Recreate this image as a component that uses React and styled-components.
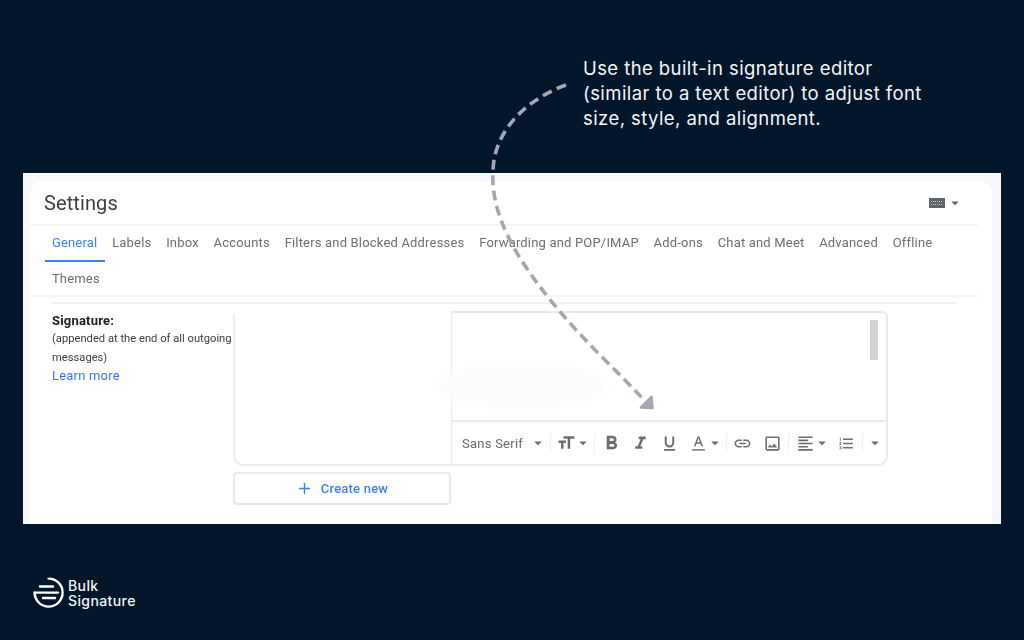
import React from 'react';
import styled, { createGlobalStyle } from 'styled-components';
import {
  MdArrowDropDown,
  MdFormatAlignLeft,
  MdFormatBold,
  MdFormatItalic,
  MdFormatListNumbered,
  MdFormatSize,
  MdFormatUnderlined,
  MdLink,
  MdOutlineImage,
} from 'react-icons/md';
import { LuPlus } from 'react-icons/lu';

const tabs = [
  'General',
  'Labels',
  'Inbox',
  'Accounts',
  'Filters and Blocked Addresses',
  'Forwarding and POP/IMAP',
  'Add-ons',
  'Chat and Meet',
  'Advanced',
  'Offline',
  'Themes',
];

export default function App() {
  return (
    <Page>
      <GlobalStyle />
      <Caption>
        Use the built-in signature editor
        <br />
        (similar to a text editor) to adjust font
        <br />
        size, style, and alignment.
      </Caption>

      <Shot>
        <Panel>
          <Header>
            <Title>Settings</Title>
            <KeyboardPick>
              <svg width="16" height="10" viewBox="0 0 16 10">
                <rect width="16" height="10" fill="#626568" />
                <path d="M2 3.5H14M2 6.5H14" stroke="#c4c6c8" strokeWidth="1" strokeDasharray="1 1" />
              </svg>
              <MdArrowDropDown size={18} />
            </KeyboardPick>
          </Header>

          <Tabs>
            {tabs.map((tab) => (
              <Tab key={tab} $active={tab === 'General'}>{tab}</Tab>
            ))}
          </Tabs>

          <Content>
            <Labels>
              <Strong>Signature:</Strong>
              <Note>
                (appended at the end of all outgoing
                <br />
                messages)
              </Note>
              <Learn>Learn more</Learn>
            </Labels>

            <SignatureColumn>
              <SignatureBox>
                <ListPane />
                <Editor>
                  <EditorBody>
                    <Smudge />
                    <Scrollbar />
                  </EditorBody>
                  <Toolbar>
                    <FontName>Sans Serif</FontName>
                    <Slot $w={22}><MdArrowDropDown size={18} /></Slot>
                    <Separator />
                    <Slot $w={28}><MdFormatSize size={20} /></Slot>
                    <Slot $w={6}><MdArrowDropDown size={18} /></Slot>
                    <Separator $left={8} />
                    <Slot $w={30}><MdFormatBold size={23} /></Slot>
                    <Slot $w={29}><MdFormatItalic size={21} /></Slot>
                    <Slot $w={28}><MdFormatUnderlined size={19} /></Slot>
                    <Slot $w={30}>
                      <svg width="17" height="17" viewBox="0 0 24 24" fill="currentColor">
                        <path d="M5.49 16h2.42l1.27-3.58h5.65L16.09 16h2.42L13.25 2h-2.5L5.49 16zm4.42-5.61 2.03-5.79h.12l2.03 5.79H9.91z" />
                        <rect x="3" y="20" width="18" height="2" />
                      </svg>
                    </Slot>
                    <Slot $w={4}><MdArrowDropDown size={18} /></Slot>
                    <Separator $left={8.5} />
                    <Slot $w={29}><MdLink size={19} /></Slot>
                    <Slot $w={31}><MdOutlineImage size={19} /></Slot>
                    <Separator $left={0} />
                    <Slot $w={31}><MdFormatAlignLeft size={19} /></Slot>
                    <Slot $w={3}><MdArrowDropDown size={18} /></Slot>
                    <Slot $w={30} $left={7.5}><MdFormatListNumbered size={17} /></Slot>
                    <Separator $left={0.5} />
                    <Slot $w={23}><MdArrowDropDown size={18} /></Slot>
                  </Toolbar>
                </Editor>
              </SignatureBox>
              <CreateButton>
                <LuPlus size={17} />
                Create new
              </CreateButton>
            </SignatureColumn>
          </Content>
        </Panel>
      </Shot>

      <Brand>
        <svg width="32" height="32" viewBox="0 0 32 32" fill="none" stroke="#fff" strokeWidth="2.4" strokeLinecap="round">
          <path d="M15.6 1.6A14 14 0 1 1 1.6 15.6" />
          <path d="M7 9.5H20" />
          <path d="M1.6 15.6H25" />
          <path d="M10 21H22" />
        </svg>
        <BrandName>Bulk<br />Signature</BrandName>
      </Brand>

      {/* dashed arrow lying over the screenshot */}
      <ArrowLayer viewBox="0 0 1024 640">
        <path
          d="M566 85C530 98 500 125 494 160C489 195 500 225 520 258C540 290 570 325 603 358C620 375 632 387 644 400"
          fill="none"
          stroke="#a3a7b1"
          strokeWidth="3.6"
          strokeDasharray="10 5.5"
        />
        <path d="M651.5 397L652.5 408L641 407.5Z" fill="#a3a7b1" stroke="#a3a7b1" strokeWidth="2.6" strokeLinejoin="round" />
      </ArrowLayer>
    </Page>
  );
}

const GlobalStyle = createGlobalStyle`
  html, body {
    margin: 0;
    padding: 0;
    background: #01162b;
  }
`;

const Page = styled.div`
  position: relative;
  width: 1024px;
  height: 640px;
  overflow: hidden;
  background: #01162b;
  font-family: Roboto, "Liberation Sans", sans-serif;
`;

const Caption = styled.div`
  box-sizing: border-box;
  height: 173px;
  padding: 56px 0 0 583px;
  color: #f4f6f8;
  font-family: Inter, "Open Sans", sans-serif;
  font-size: 18.5px;
  line-height: 25px;
  letter-spacing: 0.42px;
`;

const Shot = styled.div`
  box-sizing: border-box;
  width: 978px;
  height: 351px;
  margin-left: 23px;
  padding: 8px 9px 0 7px;
  background: #f6f8fc;
`;

const Panel = styled.div`
  height: 100%;
  background: #fff;
  border-radius: 14px 14px 0 0;
  filter: blur(0.35px);
`;

const Header = styled.div`
  display: flex;
  align-items: center;
  justify-content: space-between;
  box-sizing: border-box;
  height: 45px;
  margin-right: 14px;
  padding: 0 14px;
  border-bottom: 2px solid #f3f4f6;
`;

const Title = styled.div`
  color: #3c4043;
  font-size: 20px;
  letter-spacing: 0.1px;
`;

const KeyboardPick = styled.div`
  display: flex;
  align-items: center;
  gap: 1px;
  color: #5f6368;
`;

const Tabs = styled.div`
  display: flex;
  flex-wrap: wrap;
  align-content: flex-start;
  box-sizing: border-box;
  height: 71px;
  margin-right: 14px;
  padding-left: 14.5px;
  border-bottom: 2px solid #f3f4f6;
`;

const Tab = styled.div`
  box-sizing: border-box;
  height: 36px;
  padding: 9px 7.4px 0;
  color: ${(p) => (p.$active ? '#3b82f0' : '#6b6f73')};
  font-size: 13px;
  line-height: 16px;
  letter-spacing: 0.18px;
  white-space: nowrap;
  border-bottom: 2px solid ${(p) => (p.$active ? '#3b82f0' : 'transparent')};
`;

const Content = styled.div`
  display: flex;
  margin: 5px 35px 0 22px;
  padding-top: 7px;
  border-top: 2px solid #f1f2f4;
`;

const Labels = styled.div`
  width: 181px;
  flex: none;
  padding-top: 1px;
`;

const Strong = styled.div`
  color: #202124;
  font-size: 13px;
  font-weight: 700;
  line-height: 18px;
  letter-spacing: 0.2px;
`;

const Note = styled.div`
  color: #3c4043;
  font-size: 11.2px;
  line-height: 18.5px;
  white-space: nowrap;
`;

const Learn = styled.div`
  color: #3b78e7;
  font-size: 13px;
  line-height: 17px;
  letter-spacing: 0.2px;
`;

const SignatureColumn = styled.div`
  display: flex;
  flex-direction: column;
  gap: 6px;
  width: 655px;
`;

const SignatureBox = styled.div`
  display: flex;
  height: 155px;
`;

const ListPane = styled.div`
  flex: none;
  box-sizing: border-box;
  width: 218px;
  margin-top: 3px;
  border-left: 2px solid #eceef0;
  border-bottom: 2px solid #e8eaed;
  border-bottom-left-radius: 10px;
`;

const Editor = styled.div`
  flex: 1;
  min-width: 0;
  display: flex;
  flex-direction: column;
  border: 2px solid #e8eaed;
  border-left-width: 1px;
  border-radius: 0 6px 10px 0;
`;

const EditorBody = styled.div`
  position: relative;
  flex: 1;
`;

const Smudge = styled.div`
  position: absolute;
  left: -14px;
  top: 52px;
  width: 170px;
  height: 42px;
  border-radius: 50%;
  background: #fbfbfb;
  filter: blur(6px);
`;

const Scrollbar = styled.div`
  position: absolute;
  top: 7px;
  right: 8px;
  width: 8px;
  height: 40px;
  background: #d2d2d2;
`;

const Toolbar = styled.div`
  display: flex;
  align-items: center;
  flex: none;
  box-sizing: border-box;
  height: 44px;
  padding-left: 10px;
  border-top: 2px solid #e8eaed;
  color: #6a6e72;
`;

const FontName = styled.div`
  flex: none;
  width: 65px;
  color: #666a6e;
  font-size: 13px;
  letter-spacing: 0.25px;
  white-space: nowrap;
`;

const Slot = styled.div`
  display: flex;
  align-items: center;
  justify-content: center;
  flex: none;
  width: ${(p) => p.$w}px;
  margin-left: ${(p) => p.$left || 0}px;

  svg {
    flex: none;
  }
`;

const Separator = styled.div`
  flex: none;
  width: 1px;
  height: 20px;
  margin-left: ${(p) => (p.$left === undefined ? 1 : p.$left)}px;
  margin-right: 1px;
  background: #eceef0;
`;

const CreateButton = styled.div`
  display: flex;
  align-items: center;
  justify-content: center;
  gap: 8px;
  box-sizing: border-box;
  width: 218px;
  height: 33px;
  border: 2px solid #e8eaed;
  border-radius: 4px;
  color: #3b82f0;
  font-size: 13px;
  font-weight: 500;
  letter-spacing: 0.2px;
`;

const Brand = styled.div`
  display: flex;
  align-items: center;
  gap: 3px;
  margin: 53px 0 0 33px;
`;

const BrandName = styled.div`
  color: #f2f4f7;
  font-family: Inter, "Open Sans", sans-serif;
  font-size: 14px;
  font-weight: 500;
  line-height: 15px;
  letter-spacing: 0.4px;
`;

const ArrowLayer = styled.svg`
  position: absolute;
  inset: 0;
  width: 1024px;
  height: 640px;
  pointer-events: none;
`;
